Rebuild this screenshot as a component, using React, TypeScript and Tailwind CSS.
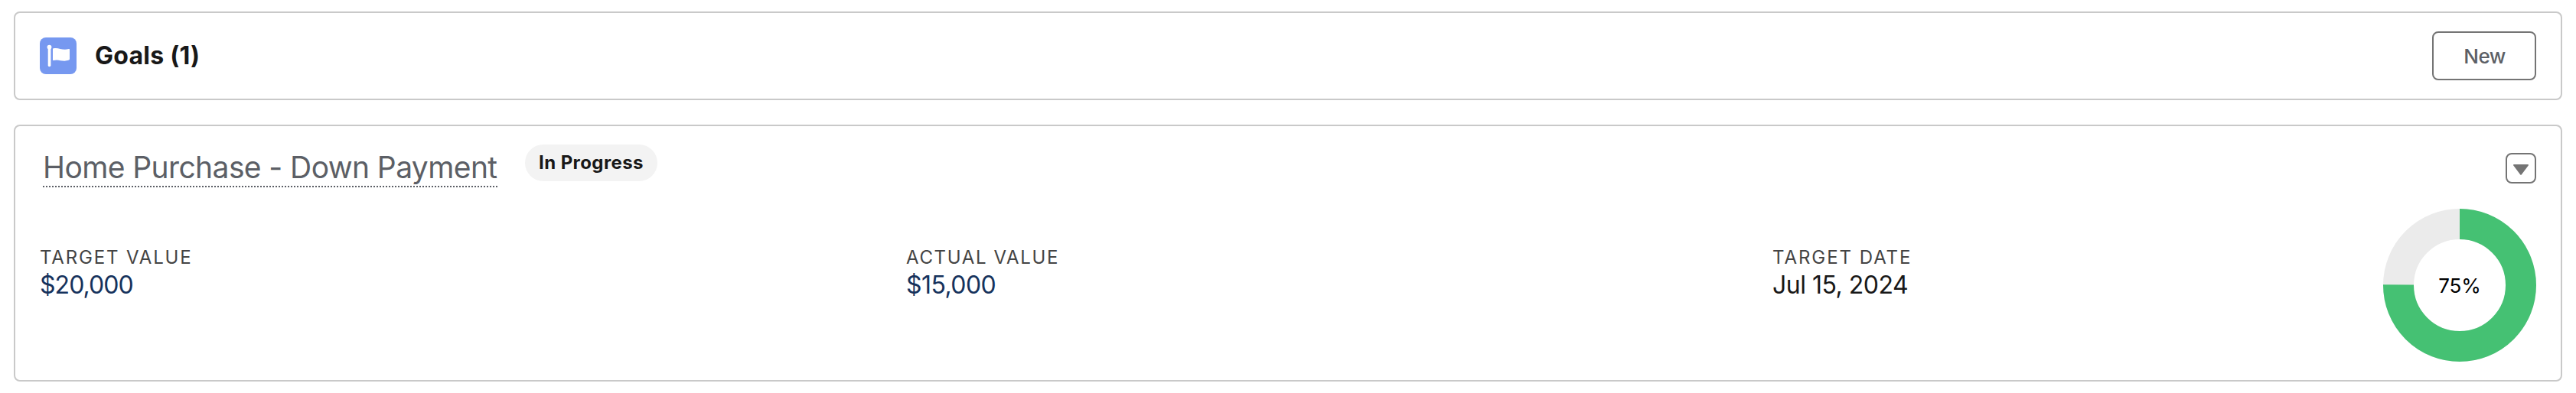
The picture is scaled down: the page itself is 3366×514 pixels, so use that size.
import React from 'react';

interface Metric {
  label: string;
  value: string;
  labelClass: string;
  valueClass: string;
}

const metrics: Metric[] = [
  { label: 'TARGET VALUE', value: '$20,000', labelClass: 'tracking-[1.85px]', valueClass: 'text-[#16325c] tracking-[-0.95px]' },
  { label: 'ACTUAL VALUE', value: '$15,000', labelClass: 'tracking-[1.64px]', valueClass: 'text-[#16325c] tracking-[-0.55px]' },
  { label: 'TARGET DATE', value: 'Jul 15, 2024', labelClass: 'tracking-[1.95px]', valueClass: 'text-[#181818] tracking-[-0.5px]' }
];

const FlagIcon: React.FC = () => (
  <div className="size-12 rounded-lg bg-[#7698f0]">
    <svg viewBox="0 0 48 48" className="size-12" fill="#fff">
      <circle cx="12.5" cy="12.6" r="2.9" />
      <rect x="10.7" y="12" width="3.7" height="26.3" rx="1.8" />
      <path d="M17 15.3c0-.7.4-1 1-1.1 7.4-1.4 10.6 3.2 20 .9.6-.1 1 .1 1 .7v12.4c0 .6-.3 1.1-1 1.4-8.4 3.2-12.8-1.9-19.8.4-.7.2-1.2-.1-1.2-.8z" />
    </svg>
  </div>
);

const ProgressRing: React.FC<{ percent: number }> = ({ percent }) => {
  const length = 2 * Math.PI * 80;

  return (
    <div className="grid size-[200px] place-items-center">
      <svg viewBox="0 0 200 200" className="col-start-1 row-start-1 size-[200px] -rotate-90" fill="none" strokeWidth="40">
        <circle cx="100" cy="100" r="80" stroke="#ebebeb" />
        <circle cx="100" cy="100" r="80" stroke="#45c173" strokeDasharray={`${(length * percent) / 100} ${length}`} />
      </svg>
      <span className="col-start-1 row-start-1 pt-0.5 text-[26px] leading-9 text-black tracking-[-0.13px]">{percent}%</span>
    </div>
  );
};

export default function App() {
  return (
    <div className="flex h-[514px] flex-col gap-8 bg-white px-[18px] pt-[15px] font-['Inter',sans-serif]">
      {/* Header card */}
      <header className="flex h-[116px] items-center justify-between rounded-lg border-2 border-[#c9c9c9] px-8">
        <div className="flex items-center gap-6">
          <FlagIcon />
          <h2 className="text-[32px] leading-10 font-bold text-[#181818] tracking-[0.24px]">Goals (1)</h2>
        </div>
        <button className="h-16 w-[136px] rounded-lg border-2 border-[#747474] pt-0.5 pl-px text-[26px] leading-[58px] font-[450] text-[#5c5f66] tracking-[-0.6px]">
          New
        </button>
      </header>

      {/* Goal card */}
      <section className="flex h-[336px] flex-col rounded-lg border-2 border-[#c9c9c9] px-8">
        <div className="flex h-[108px] items-start justify-between pt-6">
          <div className="flex items-start">
            <a className="mt-1 ml-1 h-[52px] w-[594px] border-b-2 border-dotted border-[#5c5f66] text-[39px] leading-[52px] whitespace-nowrap text-[#5c5f66] tracking-[-0.6px]">
              Home Purchase - Down Payment
            </a>
            <span className="ml-9 h-12 w-[173px] rounded-full bg-[#f3f3f3] text-center text-[24px] leading-12 font-bold text-[#181818] tracking-[0.41px]">
              In Progress
            </span>
          </div>
          <button className="mt-[11px] flex size-10 items-center justify-center rounded-lg border-2 border-[#747474]">
            <svg viewBox="0 0 20 14" className="mt-1 h-3.5 w-5" fill="#747474">
              <path d="M1 0h18c1 0 1.3.9.7 1.6l-8.8 11.7c-.5.7-1.3.7-1.8 0L.3 1.6C-.3.9 0 0 1 0z" />
            </svg>
          </button>
        </div>

        <div className="flex justify-between">
          <dl className="flex pt-[46px]">
            {metrics.map((metric) => (
              <div key={metric.label} className="w-[1132px] last:w-[400px]">
                <dt className={`text-[24px] leading-9 text-[#444] ${metric.labelClass}`}>{metric.label}</dt>
                <dd className={`text-[32px] leading-9 ${metric.valueClass}`}>{metric.value}</dd>
              </div>
            ))}
          </dl>
          <ProgressRing percent={75} />
        </div>
      </section>
    </div>
  );
}
